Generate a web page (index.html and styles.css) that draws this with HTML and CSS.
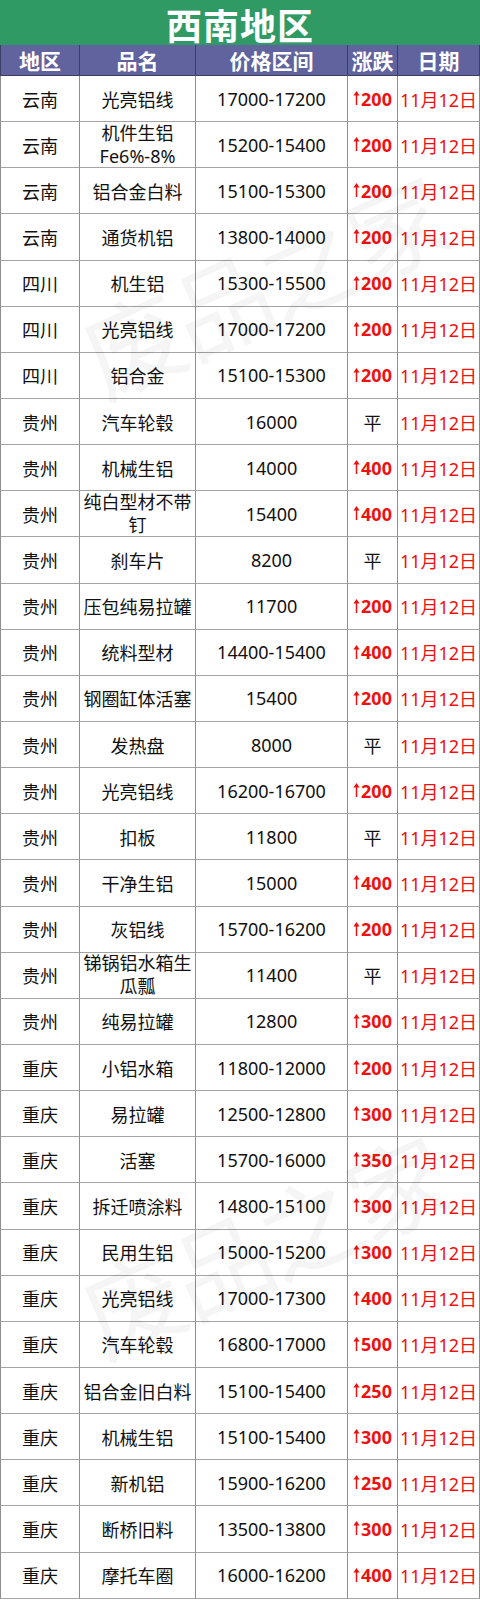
FILE: index.html
```html
<!DOCTYPE html>
<html lang="zh-CN">
<head>
<meta charset="utf-8">
<title>西南地区</title>
<link rel="stylesheet" href="styles.css">
</head>
<body>
<svg width="0" height="0" class="defs" aria-hidden="true">
  <defs>
    <symbol id="uparrow" viewBox="0 0 7 14">
      <path d="M3.5 0 L6.6 4.6 L0.4 4.6 Z" fill="currentColor"/>
      <rect x="2.75" y="3.5" width="1.5" height="10.5" fill="currentColor"/>
    </symbol>
  </defs>
</svg>
<div class="sheet">
  <div class="title"><span class="title-text">西南地区</span></div>
  <div class="grid">
    <div class="hd c1">地区</div><div class="hd">品名</div><div class="hd">价格区间</div><div class="hd">涨跌</div><div class="hd">日期</div>

    <div class="c c1">云南</div><div class="c">光亮铝线</div><div class="c">17000-17200</div><div class="c up"><svg class="ar"><use href="#uparrow"/></svg>200</div><div class="c dt">11月12日</div>
    <div class="c c1">云南</div><div class="c two">机件生铝<br>Fe6%-8%</div><div class="c">15200-15400</div><div class="c up"><svg class="ar"><use href="#uparrow"/></svg>200</div><div class="c dt">11月12日</div>
    <div class="c c1">云南</div><div class="c">铝合金白料</div><div class="c">15100-15300</div><div class="c up"><svg class="ar"><use href="#uparrow"/></svg>200</div><div class="c dt">11月12日</div>
    <div class="c c1">云南</div><div class="c">通货机铝</div><div class="c">13800-14000</div><div class="c up"><svg class="ar"><use href="#uparrow"/></svg>200</div><div class="c dt">11月12日</div>
    <div class="c c1">四川</div><div class="c">机生铝</div><div class="c">15300-15500</div><div class="c up"><svg class="ar"><use href="#uparrow"/></svg>200</div><div class="c dt">11月12日</div>
    <div class="c c1">四川</div><div class="c">光亮铝线</div><div class="c">17000-17200</div><div class="c up"><svg class="ar"><use href="#uparrow"/></svg>200</div><div class="c dt">11月12日</div>
    <div class="c c1">四川</div><div class="c">铝合金</div><div class="c">15100-15300</div><div class="c up"><svg class="ar"><use href="#uparrow"/></svg>200</div><div class="c dt">11月12日</div>
    <div class="c c1">贵州</div><div class="c">汽车轮毂</div><div class="c">16000</div><div class="c">平</div><div class="c dt">11月12日</div>
    <div class="c c1">贵州</div><div class="c">机械生铝</div><div class="c">14000</div><div class="c up"><svg class="ar"><use href="#uparrow"/></svg>400</div><div class="c dt">11月12日</div>
    <div class="c c1">贵州</div><div class="c two">纯白型材不带<br>钉</div><div class="c">15400</div><div class="c up"><svg class="ar"><use href="#uparrow"/></svg>400</div><div class="c dt">11月12日</div>
    <div class="c c1">贵州</div><div class="c">刹车片</div><div class="c">8200</div><div class="c">平</div><div class="c dt">11月12日</div>
    <div class="c c1">贵州</div><div class="c">压包纯易拉罐</div><div class="c">11700</div><div class="c up"><svg class="ar"><use href="#uparrow"/></svg>200</div><div class="c dt">11月12日</div>
    <div class="c c1">贵州</div><div class="c">统料型材</div><div class="c">14400-15400</div><div class="c up"><svg class="ar"><use href="#uparrow"/></svg>400</div><div class="c dt">11月12日</div>
    <div class="c c1">贵州</div><div class="c">钢圈缸体活塞</div><div class="c">15400</div><div class="c up"><svg class="ar"><use href="#uparrow"/></svg>200</div><div class="c dt">11月12日</div>
    <div class="c c1">贵州</div><div class="c">发热盘</div><div class="c">8000</div><div class="c">平</div><div class="c dt">11月12日</div>
    <div class="c c1">贵州</div><div class="c">光亮铝线</div><div class="c">16200-16700</div><div class="c up"><svg class="ar"><use href="#uparrow"/></svg>200</div><div class="c dt">11月12日</div>
    <div class="c c1">贵州</div><div class="c">扣板</div><div class="c">11800</div><div class="c">平</div><div class="c dt">11月12日</div>
    <div class="c c1">贵州</div><div class="c">干净生铝</div><div class="c">15000</div><div class="c up"><svg class="ar"><use href="#uparrow"/></svg>400</div><div class="c dt">11月12日</div>
    <div class="c c1">贵州</div><div class="c">灰铝线</div><div class="c">15700-16200</div><div class="c up"><svg class="ar"><use href="#uparrow"/></svg>200</div><div class="c dt">11月12日</div>
    <div class="c c1">贵州</div><div class="c two">锑锅铝水箱生<br>瓜瓢</div><div class="c">11400</div><div class="c">平</div><div class="c dt">11月12日</div>
    <div class="c c1">贵州</div><div class="c">纯易拉罐</div><div class="c">12800</div><div class="c up"><svg class="ar"><use href="#uparrow"/></svg>300</div><div class="c dt">11月12日</div>
    <div class="c c1">重庆</div><div class="c">小铝水箱</div><div class="c">11800-12000</div><div class="c up"><svg class="ar"><use href="#uparrow"/></svg>200</div><div class="c dt">11月12日</div>
    <div class="c c1">重庆</div><div class="c">易拉罐</div><div class="c">12500-12800</div><div class="c up"><svg class="ar"><use href="#uparrow"/></svg>300</div><div class="c dt">11月12日</div>
    <div class="c c1">重庆</div><div class="c">活塞</div><div class="c">15700-16000</div><div class="c up"><svg class="ar"><use href="#uparrow"/></svg>350</div><div class="c dt">11月12日</div>
    <div class="c c1">重庆</div><div class="c">拆迁喷涂料</div><div class="c">14800-15100</div><div class="c up"><svg class="ar"><use href="#uparrow"/></svg>300</div><div class="c dt">11月12日</div>
    <div class="c c1">重庆</div><div class="c">民用生铝</div><div class="c">15000-15200</div><div class="c up"><svg class="ar"><use href="#uparrow"/></svg>300</div><div class="c dt">11月12日</div>
    <div class="c c1">重庆</div><div class="c">光亮铝线</div><div class="c">17000-17300</div><div class="c up"><svg class="ar"><use href="#uparrow"/></svg>400</div><div class="c dt">11月12日</div>
    <div class="c c1">重庆</div><div class="c">汽车轮毂</div><div class="c">16800-17000</div><div class="c up"><svg class="ar"><use href="#uparrow"/></svg>500</div><div class="c dt">11月12日</div>
    <div class="c c1">重庆</div><div class="c">铝合金旧白料</div><div class="c">15100-15400</div><div class="c up"><svg class="ar"><use href="#uparrow"/></svg>250</div><div class="c dt">11月12日</div>
    <div class="c c1">重庆</div><div class="c">机械生铝</div><div class="c">15100-15400</div><div class="c up"><svg class="ar"><use href="#uparrow"/></svg>300</div><div class="c dt">11月12日</div>
    <div class="c c1">重庆</div><div class="c">新机铝</div><div class="c">15900-16200</div><div class="c up"><svg class="ar"><use href="#uparrow"/></svg>250</div><div class="c dt">11月12日</div>
    <div class="c c1">重庆</div><div class="c">断桥旧料</div><div class="c">13500-13800</div><div class="c up"><svg class="ar"><use href="#uparrow"/></svg>300</div><div class="c dt">11月12日</div>
    <div class="c c1">重庆</div><div class="c">摩托车圈</div><div class="c">16000-16200</div><div class="c up"><svg class="ar"><use href="#uparrow"/></svg>400</div><div class="c dt">11月12日</div>
  </div>
  <div class="wm wm1">废品之家</div>
  <div class="wm wm2">废品之家</div>
</div>
</body>
</html>
```

FILE: styles.css
```css
html, body {
  margin: 0;
  padding: 0;
  background: #ffffff;
}
.defs {
  position: absolute;
  width: 0;
  height: 0;
  overflow: hidden;
}
.sheet {
  position: relative;
  width: 480px;
  overflow: hidden;
  font-family: "Noto Sans", "Noto Sans CJK SC", sans-serif;
}
.title {
  height: 45px;
  background: #2f9a64;
  color: #ffffff;
  font-family: "Noto Sans CJK SC", sans-serif;
  font-weight: 700;
  font-size: 36px;
  line-height: 36px;
  display: flex;
  align-items: center;
  justify-content: center;
  letter-spacing: 1px;
}
.title-text {
  display: block;
  line-height: 36px;
  height: 36px;
  margin-top: 2px;
}
.grid {
  display: grid;
  grid-template-columns: 80px 116px 152px 50px 82px;
  grid-template-rows: 31px;
  grid-auto-rows: 46.15px;
}
.hd, .c {
  box-sizing: border-box;
  display: flex;
  align-items: center;
  justify-content: center;
  text-align: center;
  border-right: 1px solid #8e8e8e;
  border-bottom: 1px solid #a4a4a4;
  white-space: nowrap;
}
.hd {
  background: #61639e;
  color: #ffffff;
  font-family: "Noto Sans CJK SC", sans-serif;
  font-weight: 700;
  font-size: 21px;
  line-height: 28px;
  border-right-color: #3c3d66;
  border-bottom-color: #3c3d66;
}
.c1 {
  border-left: 1px solid #8e8e8e;
}
.hd.c1 {
  border-left-color: #3c3d66;
}
.c {
  color: #111111;
  font-size: 18px;
}
.two {
  line-height: 23px;
}
.up {
  color: #ee1111;
  font-weight: 700;
}
.ar {
  width: 7px;
  height: 14px;
  margin-right: 1px;
  margin-top: -1px;
  color: #ee1111;
}
.dt {
  color: #ee1111;
}
.wm {
  position: absolute;
  pointer-events: none;
  font-family: "Noto Sans CJK SC", sans-serif;
  font-size: 100px;
  font-weight: 400;
  color: rgba(0, 0, 0, 0.04);
  white-space: nowrap;
  transform: rotate(-24deg);
  transform-origin: center;
  letter-spacing: -4px;
}
.wm1 {
  left: 70px;
  top: 210px;
}
.wm2 {
  left: 70px;
  top: 1170px;
}
```
